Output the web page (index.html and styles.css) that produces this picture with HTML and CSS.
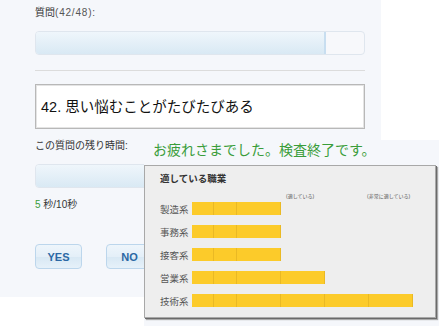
FILE: index.html
```html
<!DOCTYPE html>
<html lang="ja">
<head>
    <meta charset="UTF-8">
    <title>検査</title>
    <link rel="stylesheet" href="styles.css">
</head>
<body>
    <div class="quiz">
        <div class="label">質問<span class="num">(42/48):</span></div>
        <div class="progress"><div class="fill" style="width:290px"></div></div>
        <div class="rule"></div>
        <div class="question">42. 思い悩むことがたびたびある</div>
        <div class="label label-time">この質問の残り時間:</div>
        <div class="progress progress-time"><div class="fill" style="width:330px"></div></div>
        <div class="timer"><span class="sec">5</span> 秒/10秒</div>
        <div class="buttons">
            <button class="btn">YES</button>
            <button class="btn">NO</button>
        </div>
    </div>

    <div class="result">
        <div class="done">お疲れさまでした。検査終了です。</div>
        <div class="chart">
            <div class="chart-title">適している職業</div>
            <div class="scale">
                <span class="scale-a">(適している)</span>
                <span class="scale-b">(非常に適している)</span>
            </div>
            <div class="rows">
                <div class="row">
                    <span class="name">製造系</span>
                    <div class="bar"><span class="seg s1"></span><span class="seg s2"></span><span class="seg s3"></span></div>
                </div>
                <div class="row">
                    <span class="name">事務系</span>
                    <div class="bar"><span class="seg s1"></span><span class="seg s2"></span><span class="seg s3"></span></div>
                </div>
                <div class="row">
                    <span class="name">接客系</span>
                    <div class="bar"><span class="seg s1"></span><span class="seg s2"></span><span class="seg s3"></span></div>
                </div>
                <div class="row">
                    <span class="name">営業系</span>
                    <div class="bar"><span class="seg s1"></span><span class="seg s2"></span><span class="seg s3"></span><span class="seg s3"></span></div>
                </div>
                <div class="row">
                    <span class="name">技術系</span>
                    <div class="bar"><span class="seg s1"></span><span class="seg s2"></span><span class="seg s3"></span><span class="seg s3"></span><span class="seg s3"></span><span class="seg s3"></span></div>
                </div>
            </div>
        </div>
    </div>
</body>
</html>
```

FILE: styles.css
```css
:root {
    --panel-bg: #f5f7fb;
    --jp: "Liberation Sans", "Noto Sans CJK JP", sans-serif;
}

body {
    margin: 0;
    background: #fff;
    font-family: var(--jp);
    color: #333;
    position: relative;
    height: 326px;
    overflow: hidden;
}

.quiz {
    width: 381px;
    height: 297px;
    box-sizing: border-box;
    padding: 6px 0 0 35px;
    background: var(--panel-bg);
}

.label {
    font-size: 10px;
    line-height: 14px;
    color: #333;
}

.label .num {
    letter-spacing: 0.8px;
    color: #555;
}

.progress {
    width: 330px;
    height: 24px;
    box-sizing: border-box;
    margin-top: 11px;
    border: 1px solid #dfe6ee;
    border-radius: 4px;
    background: #f7f8fb;
    overflow: hidden;
}

.fill {
    height: 100%;
    background: linear-gradient(#eff6fb, #d9e9f4);
    border-right: 2px solid #c8def0;
    box-sizing: border-box;
}

.rule {
    width: 330px;
    height: 1px;
    margin-top: 15px;
    background: #dcdcdc;
}

.question {
    width: 330px;
    height: 45px;
    box-sizing: border-box;
    margin-top: 13px;
    padding: 11px 0 0 5px;
    background: #fff;
    border: 1px solid #b8b8b8;
    box-shadow: inset 0 0 0 1px #e4e4e4;
    font-size: 14.5px;
    line-height: 22px;
    color: #111;
}

.label-time {
    margin-top: 10px;
}

.timer {
    margin-top: 10px;
    font-size: 10px;
    line-height: 14px;
}

.timer .sec {
    color: #3a9d3a;
}

.buttons {
    display: flex;
    gap: 24px;
    margin-top: 32px;
}

.btn {
    width: 47px;
    height: 25px;
    padding: 0;
    border: 1px solid #bcd6ec;
    border-radius: 4px;
    background: linear-gradient(#eef5fb 0%, #e4eff8 50%, #d8e8f4 52%, #e6f1f9 100%);
    color: #2b68a4;
    font-family: "Liberation Sans", sans-serif;
    font-weight: bold;
    font-size: 11px;
}

/* 結果パネル */
.result {
    position: absolute;
    left: 144px;
    top: 140px;
    width: 295px;
    bottom: 0;
    background: var(--panel-bg);
}

.done {
    padding-left: 9px;
    font-size: 14px;
    line-height: 20px;
    color: #3a9d3a;
}

.chart {
    width: 292px;
    height: 153px;
    box-sizing: border-box;
    margin-top: 5px;
    padding: 7px 0 0 15px;
    background: #eeeeee;
    border: 1px solid #a8a8a8;
    box-shadow: 1px 1px 0 #6a6a6a, 2px 2px 1px #aaa;
}

.chart-title {
    font-size: 9.5px;
    line-height: 12px;
    font-weight: bold;
    color: #333;
}

.scale {
    display: flex;
    margin-top: 7px;
    padding-left: 126px;
    font-size: 5px;
    line-height: 8px;
    color: #555;
}

.scale-a {
    width: 81px;
}

.rows {
    display: flex;
    flex-direction: column;
    gap: 10px;
    margin-top: 2px;
}

.row {
    display: flex;
    align-items: center;
    height: 13px;
}

.name {
    width: 32px;
    font-size: 9.5px;
    color: #555;
}

.bar {
    display: flex;
    height: 13px;
}

.seg {
    height: 100%;
    background: #fccb2a;
    border-right: 1px solid #eab924;
    box-sizing: border-box;
}

.s1 { width: 22px; }
.s2 { width: 23px; }
.s3 { width: 44px; }
```
